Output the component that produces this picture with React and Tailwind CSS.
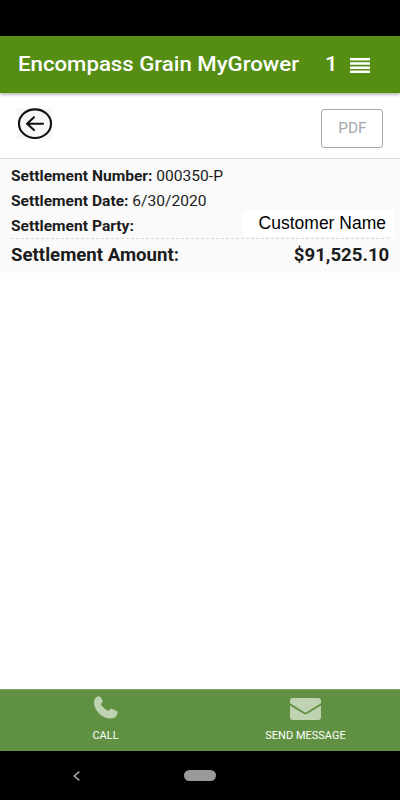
export default function App() {
  return (
    <div className="flex h-[800px] w-[400px] flex-col bg-white font-['Roboto',sans-serif] text-[#1c1c1c]">
      <div className="h-9 bg-black" />
      {/* Header */}
      <header className="relative flex h-[57px] items-center bg-[#568e14] pl-[18px] pr-[30px] font-medium text-white shadow-[0_1px_4px_rgba(0,0,0,0.4)]">
        <h1 className="w-[307px] origin-left scale-x-[1.057] whitespace-nowrap text-[21px]">
          Encompass Grain MyGrower
        </h1>
        <span className="w-[25px] origin-left scale-x-[1.057] text-[21px]">1</span>
        <svg className="mt-[2px] h-[15px] w-5" viewBox="0 0 20 15" fill="#fff">
          <path d="M0 0h20v2.5H0zM0 4.2h20v2.5H0zM0 8.400h20v2.5H0zM0 12.500h20v2.5H0z" />
        </svg>
      </header>

      {/* Toolbar */}
      <div className="flex h-[66px] items-start justify-between border-b border-[#dcdcdc] px-[17px] pt-[15px]">
        <button className="h-[31px] w-9 bg-[#f7f7f7]">
          <svg
            className="h-[31px] w-9"
            viewBox="0 0 36 31"
            fill="none"
            stroke="#111"
            strokeWidth="2.1"
            strokeLinecap="round"
            strokeLinejoin="round"
          >
            <ellipse cx="18" cy="15.700" rx="16" ry="14.300" />
            <path d="M26 15.700H10M17 9.300 10 15.700l7 6.400" />
          </svg>
        </button>
        <button className="mt-px h-[39px] w-[62px] rounded-[3px] border border-[#a3a8aa] text-[14.5px] text-[#a3a8aa]">
          <span className="inline-block scale-x-[1.06]">PDF</span>
        </button>
      </div>

      {/* Settlement details */}
      <section className="h-[114px] bg-[#fafafa] px-[11px] pt-[5px] text-[14.5px] leading-[25px]">
        <p className="w-fit origin-left scale-x-[1.075]">
          <b>Settlement Number:</b> 000350-P
        </p>
        <p className="w-fit origin-left scale-x-[1.075]">
          <b>Settlement Date:</b> 6/30/2020
        </p>
        <div className="flex h-[25px] justify-between border-b border-dashed border-[#dcdcdc]">
          <b className="origin-left scale-x-[1.075]">Settlement Party:</b>
          <span className="-mr-[5px] -mt-[4px] h-[26px] w-[151px] bg-white pr-2 text-right font-['Liberation_Sans',sans-serif] text-[17.5px] leading-[26px] text-black">
            Customer Name
          </span>
        </div>
        <div className="flex justify-between pt-[3px] text-[18px] font-bold">
          <span className="origin-left scale-x-[1.035]">Settlement Amount:</span>
          <span className="origin-right scale-x-[1.035]">$91,525.10</span>
        </div>
      </section>

      <main className="flex-1" />

      {/* Contact bar */}
      <footer className="flex h-[62px] border-t border-[#7fa662] bg-[#609142] text-[11px] text-white">
        <button className="flex w-1/2 flex-col items-center pl-[11px] pt-[6px]">
          <svg className="h-[23px] w-6" viewBox="0 0 24 23" fill="#bfd3b3">
            <path d="M2.600.900 4.600.200c.8-.2 1.500.1 1.900.8l2 3.800c.3.700.2 1.300-.3 1.800L6.800 8.100c1.500 2.800 3.900 5.200 7.400 6.900l1.900-1.700c.5-.5 1.200-.6 1.800-.4l4.700 2.100c.7.300 1.100 1 1 1.700-.3 2-1.200 3.900-2.700 4.900-1.500.9-3.500 1.200-5.700.9C7.500 21.400.6 14.500 0 7.200 0 4.400.7 1.900 2.600.9z" />
          </svg>
          <span className="mt-[9px]">CALL</span>
        </button>
        <button className="flex w-1/2 flex-col items-center pl-[11px] pt-[8px]">
          <svg className="h-[22px] w-[31px]" viewBox="0 0 31 22">
            <rect width="31" height="22" rx="3" fill="#bfd3b3" />
            <path
              d="M-1 5.800 13.600 14.800q1.900 1.100 3.800 0L32 5.800"
              fill="none"
              stroke="#609142"
              strokeWidth="1.9"
            />
          </svg>
          <span className="mt-[8px]">SEND MESSAGE</span>
        </button>
      </footer>

      {/* System navigation */}
      <nav className="flex h-[49px] items-center bg-black pl-[73px]">
        <svg className="h-[10px] w-[7px]" viewBox="0 0 7 10" fill="none" stroke="#a0a0a0" strokeWidth="1.6">
          <path d="M6.300 .6 1.400 5l4.900 4.400" />
        </svg>
        <div className="ml-[104px] h-[11px] w-8 rounded-full bg-[#999]" />
      </nav>
    </div>
  );
}
